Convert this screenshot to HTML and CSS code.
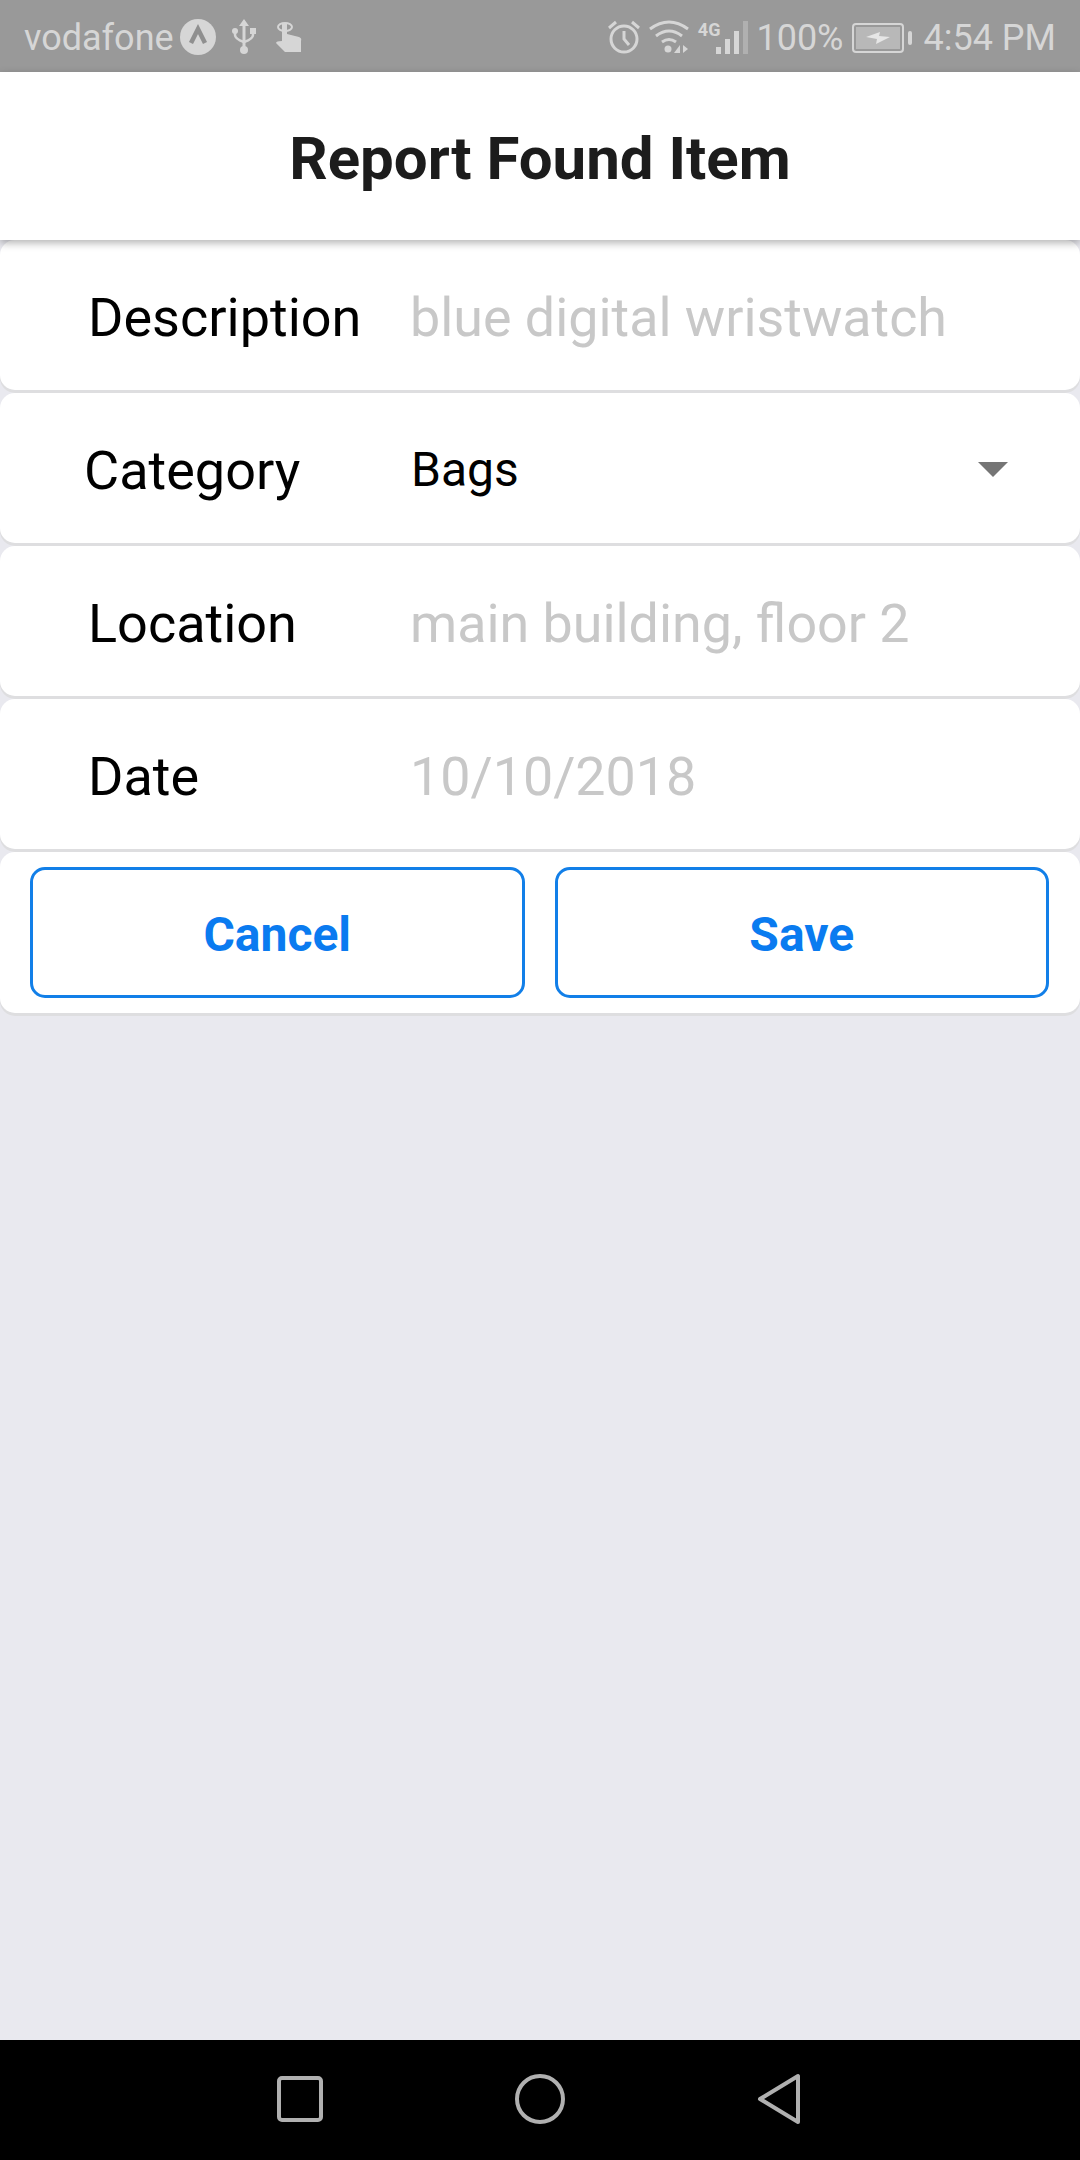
FILE: index.html
```html
<!DOCTYPE html>
<html lang="en">
<head>
    <meta charset="UTF-8">
    <meta name="viewport" content="width=device-width, initial-scale=1.0">
    <title>Report Found Item</title>
    <link rel="stylesheet" href="styles.css">
</head>
<body>

    <!-- Status bar -->
    <div class="status-bar">
        <div class="status-left">
            <span class="carrier">vodafone</span>
            <svg class="ic-expo" width="36" height="36" viewBox="0 0 36 36">
                <circle cx="18" cy="18" r="18" fill="#d6d6d6"/>
                <path d="M11 24 L18 10 L25 24" fill="none" stroke="#8f8f8f" stroke-width="4.5"/>
            </svg>
            <svg class="ic-usb" width="24" height="36" viewBox="0 0 24 36">
                <path d="M12 0 L17 7 H13.5 V28 H10.5 V7 H7 Z" fill="#d6d6d6"/>
                <circle cx="12" cy="31" r="4" fill="#d6d6d6"/>
                <path d="M3 12 V16 Q3 20 12 23 Q21 20 21 16 V12" fill="none" stroke="#d6d6d6" stroke-width="2.5"/>
                <circle cx="3" cy="12" r="3" fill="#d6d6d6"/>
                <rect x="18" y="9" width="6" height="6" fill="#d6d6d6"/>
            </svg>
            <svg class="ic-touch" width="26" height="30" viewBox="0 0 26 30">
                <ellipse cx="9" cy="5" rx="7" ry="4" fill="none" stroke="#d6d6d6" stroke-width="2"/>
                <path d="M6 1 H11 V12 L23 15 Q26 16 25 19 V30 H9 L0 21 Q0 19 6 19 Z" fill="#d6d6d6"/>
            </svg>
        </div>
        <div class="status-right">
            <svg class="ic-alarm" width="34" height="34" viewBox="0 0 34 34">
                <circle cx="17" cy="19" r="13" fill="none" stroke="#d6d6d6" stroke-width="3"/>
                <path d="M17 11 V19 L22 25" fill="none" stroke="#d6d6d6" stroke-width="3"/>
                <path d="M2 8 L9 2 M32 8 L25 2" stroke="#d6d6d6" stroke-width="3"/>
            </svg>
            <svg class="ic-wifi" width="40" height="34" viewBox="0 0 40 34">
                <path d="M1 9 Q20 -5 39 9 M7 16 Q20 6 33 16 M13 22 Q20 17 27 22" fill="none" stroke="#d6d6d6" stroke-width="3"/>
                <circle cx="19" cy="29" r="3.5" fill="#d6d6d6"/>
                <path d="M31 25 V33 H25 Z M34 25 L39 29 L34 33 Z" fill="#d6d6d6"/>
            </svg>
            <span class="net">4G</span>
            <svg class="ic-signal" width="36" height="34" viewBox="0 0 36 34">
                <rect x="1" y="27" width="5" height="7" fill="#d6d6d6"/>
                <rect x="10" y="19" width="5" height="15" fill="#d6d6d6"/>
                <rect x="19" y="11" width="5" height="23" fill="#d6d6d6"/>
                <rect x="28" y="1" width="5" height="33" fill="#b0b0b0"/>
            </svg>
            <span class="pct">100%</span>
            <svg class="ic-batt" width="62" height="30" viewBox="0 0 62 30">
                <rect x="1" y="1" width="50" height="28" rx="3" fill="none" stroke="#d6d6d6" stroke-width="2"/>
                <rect x="4" y="4" width="44" height="22" fill="#b8b8b8"/>
                <path d="M14 14 L28 9 L27 13 L38 14 L24 21 L25 16 Z" fill="#e6e6e6"/>
                <rect x="56" y="8" width="4" height="14" rx="2" fill="#d6d6d6"/>
            </svg>
            <span class="clock">4:54 PM</span>
        </div>
    </div>

    <header class="top-bar">
        <h1>Report Found Item</h1>
    </header>

    <main class="form-list">
        <div class="item">
            <label class="item-label">Description</label>
            <span class="placeholder">blue digital wristwatch</span>
        </div>
        <div class="item item-category">
            <label class="item-label">Category</label>
            <span class="value">Bags</span>
            <span class="caret"></span>
        </div>
        <div class="item">
            <label class="item-label">Location</label>
            <span class="placeholder">main building, floor 2</span>
        </div>
        <div class="item">
            <label class="item-label">Date</label>
            <span class="placeholder">10/10/2018</span>
        </div>
        <div class="item item-buttons">
            <button class="btn">Cancel</button>
            <button class="btn">Save</button>
        </div>
    </main>

    <!-- Android nav -->
    <footer class="nav-bar">
        <svg width="46" height="46" viewBox="0 0 46 46">
            <rect x="2" y="2" width="42" height="42" rx="3" fill="none" stroke="#b0b0b0" stroke-width="4"/>
        </svg>
        <svg width="50" height="50" viewBox="0 0 50 50">
            <circle cx="25" cy="25" r="23" fill="none" stroke="#b0b0b0" stroke-width="4"/>
        </svg>
        <svg width="44" height="52" viewBox="0 0 44 52">
            <path d="M41 3 V49 L3 26 Z" fill="none" stroke="#b0b0b0" stroke-width="4" stroke-linejoin="round"/>
        </svg>
    </footer>

</body>
</html>
```

FILE: styles.css
```css
* { box-sizing: border-box; }
html, body { margin: 0; padding: 0; }
body { width: 1080px; height: 2160px; font-family: Roboto, sans-serif; background: #e9e9ef; display: flex; flex-direction: column; overflow: hidden; }

.status-bar { height: 72px; background: #999999; color: #d6d6d6; display: flex; justify-content: space-between; align-items: center; padding: 4px 24px 0 24px; font-size: 36px; flex-shrink: 0; }
.status-left, .status-right { display: flex; align-items: center; }
.ic-expo { margin-left: 6px; margin-top: -3px; }
.ic-usb { margin-left: 16px; margin-top: -3px; }
.ic-touch { margin-left: 20px; margin-top: -3px; }
.ic-alarm, .ic-wifi, .ic-signal { margin-top: -2px; }
.ic-wifi { margin-left: 8px; }
.net { font-size: 18px; font-weight: bold; align-self: flex-start; margin: 2px 0 0 9px; }
.ic-signal { margin-left: -5px; }
.pct { margin-left: 5px; }
.ic-batt { margin-left: 8px; }
.clock { margin-left: 10px; }

.top-bar { height: 168px; padding-top: 5px; background: white; display: flex; align-items: center; justify-content: center; box-shadow: 0 3px 8px rgba(0, 0, 0, 0.3); position: relative; z-index: 1; flex-shrink: 0; }
.top-bar h1 { margin: 0; font-size: 60px; font-weight: bold; color: #1c1c1c; }

.form-list { flex: 1; }
.item { height: 150px; padding-top: 4px; background: white; border-radius: 15px; display: flex; align-items: center; margin-bottom: 3px; box-shadow: 0 3px 0 #dedee0; }
.item-label { width: 322px; padding-left: 88px; font-size: 54px; color: black; flex-shrink: 0; white-space: nowrap; }
.item-category .item-label { padding-left: 84px; }
.placeholder { margin-left: 88px; font-size: 53.8px; color: #c8c8c8; }
.value { margin: 0 0 2px 89px; font-size: 48px; color: black; flex: 1; }
.caret { width: 0; height: 0; border-left: 15px solid transparent; border-right: 15px solid transparent; border-top: 15px solid #757575; margin: 0 72px 2px 0; }

.item-buttons { height: 161px; padding: 0 31px 0 30px; gap: 30px; margin: 0; }
.btn { flex: 1; height: 131px; background: white; border: 3px solid #127fe8; border-radius: 15px; color: #0a7bf0; font-family: Roboto, sans-serif; font-size: 48px; font-weight: bold; padding: 4px 0 0 0; }

.nav-bar { height: 120px; background: black; display: flex; align-items: center; justify-content: center; gap: 192px; flex-shrink: 0; padding: 0 2px 2px 0; }
```
